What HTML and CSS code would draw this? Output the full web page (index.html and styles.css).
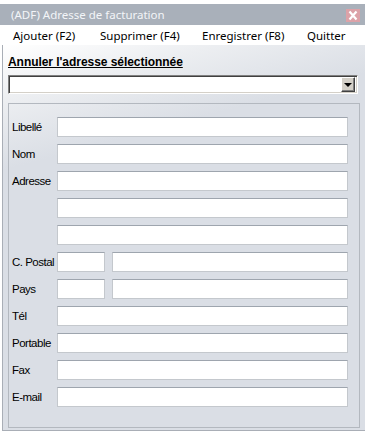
FILE: index.html
```html
<!DOCTYPE html>
<html lang="fr">
<head>
    <meta charset="UTF-8">
    <title>Adresse de facturation</title>
    <link rel="stylesheet" href="styles.css">
</head>
<body>
    <div id="window">
        <div class="titlebar">
            <span class="title">(ADF) Adresse de facturation</span>
            <span class="close">
                <svg width="14" height="13" viewBox="0 0 14 13">
                    <path d="M3.5 2.5 L10.5 10.5 M10.5 2.5 L3.5 10.5" stroke="#fff" stroke-width="2.2" fill="none"/>
                </svg>
            </span>
        </div>
        <ul class="menubar">
            <li class="m1">Ajouter (F2)</li>
            <li class="m2">Supprimer (F4)</li>
            <li class="m3">Enregistrer (F8)</li>
            <li class="m4">Quitter</li>
        </ul>
        <div class="content">
            <a class="cancel">Annuler l'adresse sélectionnée</a>
            <div class="combo">
                <div class="combo-text"></div>
                <div class="combo-btn"><span class="arrow"></span></div>
            </div>
            <div class="group">
                <div class="row"><label>Libellé</label><div class="field"></div></div>
                <div class="row"><label>Nom</label><div class="field"></div></div>
                <div class="row"><label>Adresse</label><div class="field"></div></div>
                <div class="row"><label></label><div class="field"></div></div>
                <div class="row"><label></label><div class="field"></div></div>
                <div class="row"><label>C. Postal</label><div class="field small"></div><div class="field"></div></div>
                <div class="row"><label>Pays</label><div class="field small"></div><div class="field"></div></div>
                <div class="row"><label>Tél</label><div class="field"></div></div>
                <div class="row"><label>Portable</label><div class="field"></div></div>
                <div class="row"><label>Fax</label><div class="field"></div></div>
                <div class="row"><label>E-mail</label><div class="field"></div></div>
            </div>
        </div>
    </div>
</body>
</html>
```

FILE: styles.css
```css
*{
    margin: 0;
    padding: 0;
    list-style: none;
    box-sizing: border-box;
}
body{
    background: #fff;
    font-family: "Liberation Sans", Arial, sans-serif;
}
#window{
    width: 365px;
    height: 433px;
    padding-top: 4px;
    display: flex;
    flex-direction: column;
}
.titlebar{
    height: 21px;
    background: #a9b0ba;
    display: flex;
    align-items: center;
    justify-content: space-between;
    padding: 0 5px 0 11px;
}
.title{
    font-family: "Noto Sans", "Open Sans", sans-serif;
    font-size: 11.5px;
    color: #f3f5f8;
}
.close{
    width: 14px;
    height: 13px;
    background: #dca2a8;
    display: block;
    margin-top: 1px;
}
.close svg{
    display: block;
}
.menubar{
    height: 20px;
    display: flex;
    align-items: center;
    padding-left: 13px;
    background: #fff;
    font-family: "Noto Sans", "Open Sans", sans-serif;
    font-size: 11.5px;
    color: #000;
}
.m1{width: 87px;}
.m2{width: 102px;}
.m3{width: 105px;}
.content{
    flex: 1;
    border-left: 1px solid #a9aeb6;
    border-bottom: 1px solid #a9aeb6;
    margin-left: 2px;
    margin-bottom: 2px;
    padding: 10px 0 0 5px;
    background: linear-gradient(165deg, #ffffff 0%, #eceef1 12%, #dadee5 26%);
}
.cancel{
    display: block;
    font-weight: bold;
    font-size: 12px;
    line-height: 14px;
    letter-spacing: -0.05px;
    text-decoration: underline;
    color: #000;
}
.combo{
    margin-top: 6px;
    width: 350px;
    height: 19px;
    display: flex;
    background: #fff;
    border-top: 1px solid #808080;
    border-left: 1px solid #808080;
    border-right: 1px solid #fff;
    border-bottom: 1px solid #fff;
    box-shadow: inset 1px 1px 0 #404040, inset -1px -1px 0 #d4d0c8;
    padding: 2px 2px 2px 2px;
}
.combo-text{
    flex: 1;
}
.combo-btn{
    width: 14px;
    height: 15px;
    margin-top: -1px;
    background: #d4d0c8;
    border-top: 1px solid #fff;
    border-left: 1px solid #fff;
    border-right: 1px solid #404040;
    border-bottom: 1px solid #404040;
    box-shadow: inset -1px -1px 0 #808080;
    display: flex;
    align-items: center;
    justify-content: center;
}
.arrow{
    width: 0;
    height: 0;
    border-left: 4px solid transparent;
    border-right: 4px solid transparent;
    border-top: 4px solid #000;
    margin-top: 1px;
}
.group{
    margin-top: 9px;
    width: 352px;
    height: 325px;
    border: 1px solid #b3b8bf;
    padding: 13px 0 0 3px;
    display: flex;
    flex-direction: column;
    gap: 7px;
}
.row{
    display: flex;
    height: 20px;
    align-items: center;
    gap: 7px;
}
.row label{
    width: 45px;
    margin-right: -7px;
    font-size: 11.5px;
    letter-spacing: -0.5px;
    color: #000;
}
.field{
    width: 291px;
    height: 20px;
    background: #fff;
    border: 1px solid #c4c8cd;
    border-top-color: #9ea5ae;
}
.field.small{
    width: 48px;
}
.row .field.small + .field{
    width: 236px;
}
```
